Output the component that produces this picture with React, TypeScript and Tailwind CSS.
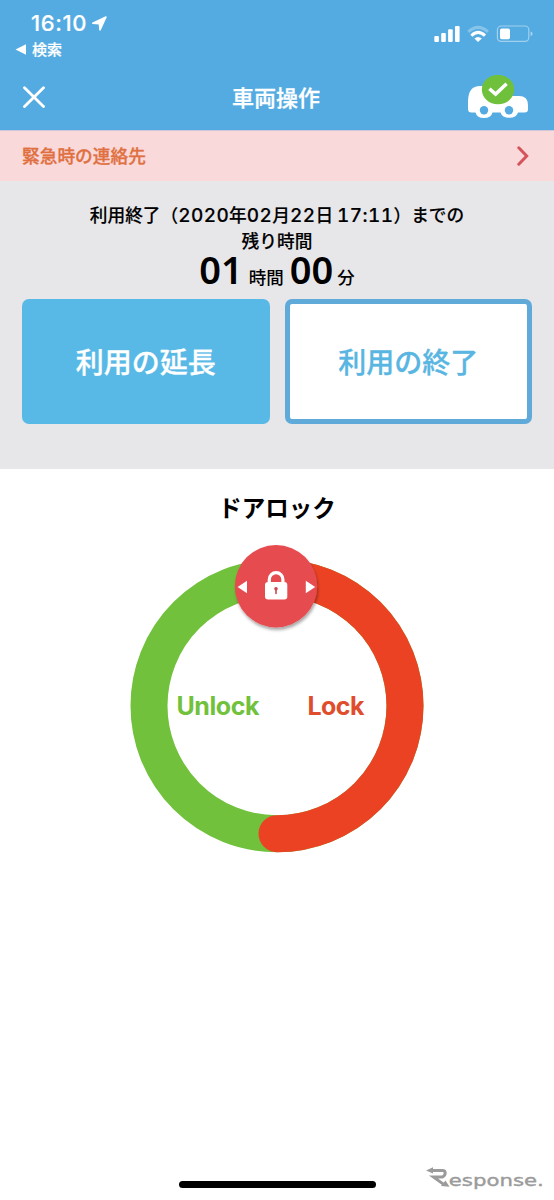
import type { ReactNode } from "react";

const RING_RADIUS = 128;

export default function App() {
  return (
    <div className="flex h-[1200px] w-[554px] flex-col overflow-hidden bg-white font-['Noto_Sans_CJK_JP',sans-serif] text-black">
      <header className="h-[130px] bg-[#54abe1] text-white">
        <StatusBar />
        <NavBar />
      </header>
      <EmergencyLink />
      <RemainingTime />
      <DoorLock />
      <Footer />
    </div>
  );
}

function StatusBar() {
  return (
    <div className="flex h-[64px] justify-between pt-[11px] pr-[21px] pl-[15px]">
      <div>
        <div className="flex h-6 items-center pl-4 font-['Inter',sans-serif] text-[22px] leading-6 font-medium">
          <span className="w-[57px] tracking-[0.6px] whitespace-nowrap [-webkit-text-stroke:0.2px]">
            16:10
          </span>
          <svg className="ml-[3px] h-[17px] w-[17px]" viewBox="0 0 17 17">
            <path
              d="M1.8 8.2 15 2 9 14.8 8.4 8.6Z"
              fill="currentColor"
              stroke="currentColor"
              strokeWidth="1.6"
              strokeLinejoin="round"
            />
          </svg>
        </div>
        <div className="flex h-[29px] items-center text-[15px] font-medium [-webkit-text-stroke:0.2px]">
          <svg className="h-[11px] w-[11px]" viewBox="0 0 11 11">
            <path d="M0.5 5.5 11 .3V10.7Z" fill="currentColor" />
          </svg>
          <span className="ml-[6px]">検索</span>
        </div>
      </div>
      <svg className="mt-[13px] h-[20px] w-[100px]" viewBox="433 24 100 20">
        <g fill="#fff">
          <rect x="434.3" y="36" width="4.6" height="6" rx="1" />
          <rect x="441.2" y="33" width="4.6" height="9" rx="1" />
          <rect x="448.1" y="29.2" width="4.6" height="12.8" rx="1" />
          <rect x="455" y="26" width="4.6" height="16" rx="1" />
          <path d="M478 42 474.4 38.4Q478 35.4 481.8 38.4Z" />
        </g>
        <g fill="none" stroke="#fff" strokeWidth="3">
          <path d="M468.3 31.8Q478 23 488 31.8" opacity="0.3" />
          <path d="M471.4 35.7Q478 29.2 485 35.7" />
        </g>
        <rect
          x="497.4"
          y="26"
          width="31.4"
          height="15.4"
          rx="3.8"
          fill="none"
          stroke="#fff"
          strokeWidth="1.2"
          opacity="0.45"
        />
        <rect x="500" y="28.4" width="10" height="10.8" rx="1.8" fill="#fff" />
        <path
          d="M530.6 31.5Q532.6 32.2 532.6 33.8T530.6 36.1Z"
          fill="#fff"
          opacity="0.5"
        />
      </svg>
    </div>
  );
}

function NavBar() {
  return (
    <div className="flex h-[66px] items-center justify-between pr-[25px] pl-[23px]">
      <svg className="h-[22px] w-[62px]" viewBox="0 0 62 22">
        <path
          d="M1.5 1.7 20.5 20.5M20.5 1.7 1.5 20.5"
          stroke="currentColor"
          strokeWidth="2.8"
          strokeLinecap="round"
        />
      </svg>
      <h1 className="pb-[2px] text-[22px] leading-[30px] font-medium [-webkit-text-stroke:0.3px]">
        車両操作
      </h1>
      <svg className="h-[44px] w-[62px]" viewBox="467 75 62 44">
        <path
          d="M468 109V101Q468.3 86 480 86H498Q504 86 509 96H519Q528 96 528 105V109.5Q528 112.5 524.5 112.5H518A9 7 0 0 1 500.5 112.5H492.5A8.7 7 0 0 1 475.5 112.5H471.5Q468 112.5 468 109Z"
          fill="#fff"
        />
        <circle cx="484" cy="110.3" r="4.2" fill="#54abe1" />
        <circle cx="509" cy="110.3" r="4.2" fill="#54abe1" />
        <ellipse cx="498" cy="89.5" rx="16.2" ry="14.7" fill="#6fc13c" />
        <path
          d="M489.4 88.7 495.6 94.1 506.6 83.8"
          fill="none"
          stroke="#fff"
          strokeWidth="3.5"
        />
      </svg>
    </div>
  );
}

function EmergencyLink() {
  return (
    <div className="flex h-[51px] items-center justify-between border-t border-[#cfc6dc] bg-[#f9d9da] pr-[25px] pl-[22px]">
      <span className="pb-[2px] text-[17.7px] leading-6 font-medium text-[#e0703f] [-webkit-text-stroke:0.3px]">
        緊急時の連絡先
      </span>
      <svg className="h-[20px] w-[12px]" viewBox="0 0 12 20" fill="none">
        <path
          d="M1.8 1.8 9.7 10 1.8 18.2"
          stroke="#d5545b"
          strokeWidth="3"
          strokeLinecap="round"
        />
      </svg>
    </div>
  );
}

function RemainingTime() {
  return (
    <section className="h-[288px] bg-[#e7e7ea] px-[22px] pt-[21px]">
      <p className="h-[50px] text-center text-[17.7px] leading-[25px] font-medium whitespace-nowrap [-webkit-text-stroke:0.15px]">
        利用終了（<Num>2020</Num>年<Num>02</Num>月<Num>22</Num>日{" "}
        <Num>17:11</Num>）までの
        <br />
        残り時間
      </p>
      <div className="flex h-[47px] items-baseline justify-center text-[17.5px] leading-[35px] font-medium">
        <BigNum>01</BigNum>
        <span className="mx-[6px]">時間</span>
        <BigNum>00</BigNum>
        <span className="ml-[4px]">分</span>
      </div>
      <div className="grid h-[125px] grid-cols-2 gap-[15px] text-[28px] font-medium [-webkit-text-stroke:0.3px]">
        <button className="rounded-[7px] bg-[#59b9e6] pb-px text-white">
          利用の延長
        </button>
        <button className="rounded-[7px] border-5 border-[#5faad9] bg-white pb-px text-[#59b5e1]">
          利用の終了
        </button>
      </div>
    </section>
  );
}

function Num({ children }: { children: ReactNode }) {
  return (
    <span className="font-['Inter',sans-serif] text-[19px] tracking-[0.4px] tabular-nums">
      {children}
    </span>
  );
}

function BigNum({ children }: { children: ReactNode }) {
  return (
    <span className="font-['Noto_Sans',sans-serif] text-[38px] font-semibold">
      {children}
    </span>
  );
}

function DoorLock() {
  return (
    <section className="flex flex-1 flex-col items-center pt-[22px]">
      <h2 className="text-[23.5px] leading-8 font-bold">ドアロック</h2>
      <svg
        className="mt-[17px] h-[320px] w-[300px]"
        viewBox="127 540 300 320"
        fill="none"
      >
        <defs>
          <filter id="knob-shadow" x="-20%" y="-20%" width="140%" height="140%">
            <feDropShadow
              dx="1"
              dy="2.5"
              stdDeviation="1.5"
              floodColor="#000"
              floodOpacity="0.35"
            />
          </filter>
        </defs>
        <circle
          cx="277"
          cy="705.7"
          r={RING_RADIUS}
          stroke="#71c13c"
          strokeWidth="37"
        />
        <path
          d="M277 577.7A128 128 0 0 1 277 833.7"
          stroke="#ec4224"
          strokeWidth="37"
          strokeLinecap="round"
        />
        <g fontFamily="Inter, sans-serif" fontSize="25" fontWeight="700">
          <text x="176.5" y="715" fill="#71c13c" textLength="83">
            Unlock
          </text>
          <text x="307.5" y="715" fill="#e04d2c" textLength="57">
            Lock
          </text>
        </g>
        <circle
          cx="276"
          cy="586.2"
          r="41.2"
          fill="#e64c4f"
          filter="url(#knob-shadow)"
        />
        <path
          d="M237.6 587 247 580.8V593.2ZM315.2 587 305.8 580.8V593.2Z"
          fill="#fff"
        />
        <rect x="265" y="582" width="22.3" height="17.5" rx="3" fill="#fff" />
        <path
          d="M269.3 583V579.5A6.8 6.8 0 0 1 282.9 579.5V583"
          stroke="#fff"
          strokeWidth="3.2"
        />
        <path
          d="M276 588.2V593.5"
          stroke="#c94a50"
          strokeWidth="1.6"
          strokeLinecap="round"
        />
        <circle cx="276" cy="588.8" r="1.8" fill="#c94a50" />
      </svg>
    </section>
  );
}

function Footer() {
  return (
    <footer className="flex h-[40px] items-start justify-between pr-[10px] pl-[179px]">
      <div className="mt-[21px] h-[7px] w-[197px] rounded-full bg-black" />
      <svg className="mt-[5px] h-[30px] w-[120px]" viewBox="424 1165 120 30">
        <path
          d="M432 1170.4H442.5Q445.2 1170.4 445.2 1173T442.5 1177H433.5L444 1184.6"
          fill="none"
          stroke="#9b9b9b"
          strokeWidth="3"
        />
        <path
          d="M426 1170.4 433 1167.3V1173.5ZM449.5 1186.7 441 1186 445.5 1180.6Z"
          fill="#9b9b9b"
        />
        <text
          x="448.8"
          y="1186"
          fill="#9b9b9b"
          fontFamily="'DejaVu Sans', sans-serif"
          fontSize="16.5"
          stroke="#9b9b9b"
          strokeWidth="0.4"
          textLength="95"
          lengthAdjust="spacingAndGlyphs"
        >
          esponse.
        </text>
      </svg>
    </footer>
  );
}
